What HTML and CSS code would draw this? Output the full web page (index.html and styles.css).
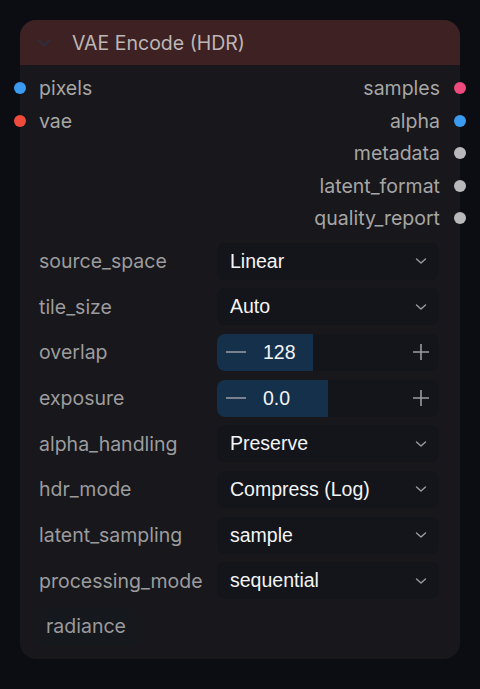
FILE: index.html
```html
<!DOCTYPE html>
<html>
<head>
<meta charset="utf-8">
<link rel="stylesheet" href="styles.css">
</head>
<body>
<div class="node">
  <div class="header">
    <svg class="collapse" width="14" height="10" viewBox="0 0 14 10"><path d="M2 2.5 L7 7.5 L12 2.5" fill="none" stroke="#2c2f3d" stroke-width="1.8" stroke-linecap="round" stroke-linejoin="round"/></svg>
    <span class="title">VAE Encode (HDR)</span>
  </div>
  <div class="slots">
    <div class="slot-row"><div class="slot in"><span class="dot blue"></span>pixels</div><div class="slot out">samples<span class="dot pink"></span></div></div>
    <div class="slot-row"><div class="slot in"><span class="dot red"></span>vae</div><div class="slot out">alpha<span class="dot blue"></span></div></div>
    <div class="slot-row"><div class="slot out">metadata<span class="dot gray"></span></div></div>
    <div class="slot-row"><div class="slot out">latent_format<span class="dot gray"></span></div></div>
    <div class="slot-row"><div class="slot out">quality_report<span class="dot gray"></span></div></div>
  </div>
  <div class="widgets">
    <div class="widget"><span class="wlabel">source_space</span><div class="wbox combo"><span class="val">Linear</span><svg class="chev" width="12" height="8" viewBox="0 0 12 8"><path d="M1.5 2 L6 6 L10.5 2" fill="none" stroke="#9a9ca4" stroke-width="1.4" stroke-linecap="round" stroke-linejoin="round"/></svg></div></div>
    <div class="widget"><span class="wlabel">tile_size</span><div class="wbox combo"><span class="val">Auto</span><svg class="chev" width="12" height="8" viewBox="0 0 12 8"><path d="M1.5 2 L6 6 L10.5 2" fill="none" stroke="#9a9ca4" stroke-width="1.4" stroke-linecap="round" stroke-linejoin="round"/></svg></div></div>
    <div class="widget"><span class="wlabel">overlap</span><div class="wbox number"><div class="fill" style="width:96px"></div><svg class="minus" width="20" height="2" viewBox="0 0 20 2"><path d="M0 1 H20" stroke="#9a9ca4" stroke-width="1.6"/></svg><span class="val num">128</span><svg class="plus" width="16" height="16" viewBox="0 0 16 16"><path d="M8 0 V16 M0 8 H16" stroke="#9a9ca4" stroke-width="1.6"/></svg></div></div>
    <div class="widget"><span class="wlabel">exposure</span><div class="wbox number"><div class="fill" style="width:111px"></div><svg class="minus" width="20" height="2" viewBox="0 0 20 2"><path d="M0 1 H20" stroke="#9a9ca4" stroke-width="1.6"/></svg><span class="val num">0.0</span><svg class="plus" width="16" height="16" viewBox="0 0 16 16"><path d="M8 0 V16 M0 8 H16" stroke="#9a9ca4" stroke-width="1.6"/></svg></div></div>
    <div class="widget"><span class="wlabel">alpha_handling</span><div class="wbox combo"><span class="val">Preserve</span><svg class="chev" width="12" height="8" viewBox="0 0 12 8"><path d="M1.5 2 L6 6 L10.5 2" fill="none" stroke="#9a9ca4" stroke-width="1.4" stroke-linecap="round" stroke-linejoin="round"/></svg></div></div>
    <div class="widget"><span class="wlabel">hdr_mode</span><div class="wbox combo"><span class="val">Compress (Log)</span><svg class="chev" width="12" height="8" viewBox="0 0 12 8"><path d="M1.5 2 L6 6 L10.5 2" fill="none" stroke="#9a9ca4" stroke-width="1.4" stroke-linecap="round" stroke-linejoin="round"/></svg></div></div>
    <div class="widget"><span class="wlabel">latent_sampling</span><div class="wbox combo"><span class="val">sample</span><svg class="chev" width="12" height="8" viewBox="0 0 12 8"><path d="M1.5 2 L6 6 L10.5 2" fill="none" stroke="#9a9ca4" stroke-width="1.4" stroke-linecap="round" stroke-linejoin="round"/></svg></div></div>
    <div class="widget"><span class="wlabel">processing_mode</span><div class="wbox combo"><span class="val">sequential</span><svg class="chev" width="12" height="8" viewBox="0 0 12 8"><path d="M1.5 2 L6 6 L10.5 2" fill="none" stroke="#9a9ca4" stroke-width="1.4" stroke-linecap="round" stroke-linejoin="round"/></svg></div></div>
  </div>
  <div class="footer"><span class="tag">radiance</span></div>
</div>
</body>
</html>
```

FILE: styles.css
```css
html, body {
  margin: 0;
  padding: 0;
  background: #0b0d13;
  width: 480px;
  height: 689px;
  overflow: hidden;
  font-family: Inter, "Noto Sans", sans-serif;
}
body {
  padding-top: 20px;
  box-sizing: border-box;
}
.node {
  position: relative;
  margin-left: 20px;
  width: 440px;
  height: 639px;
  background: #18171b;
  border-radius: 16px;
  box-sizing: border-box;
}
.header {
  height: 45px;
  background: #3e2122;
  border-radius: 16px 16px 0 0;
  display: flex;
  align-items: center;
  padding-left: 17px;
}
.collapse {
  margin-right: 21px;
}
.title {
  color: #bdb6b6;
  font-size: 19.5px;
}
.slots {
  padding-top: 7px;
  display: flex;
  flex-direction: column;
}
.slot-row {
  height: 32.5px;
  display: flex;
  align-items: center;
  justify-content: space-between;
  font-size: 19.5px;
  color: #a6a6a6;
}
.slot {
  display: flex;
  align-items: center;
}
.slot.in {
  margin-left: -6px;
}
.slot.in .dot {
  margin-right: 13px;
}
.slot.out {
  margin-left: auto;
  margin-right: -6px;
}
.slot.out .dot {
  margin-left: 14px;
}
.dot {
  width: 12px;
  height: 12px;
  border-radius: 50%;
  display: inline-block;
}
.dot.blue { background: #3a9bf0; }
.dot.red { background: #ef4b3c; }
.dot.pink { background: #ee4a7e; }
.dot.gray { background: #b9b9bb; }
.widgets {
  margin-top: 8px;
  display: flex;
  flex-direction: column;
  gap: 8.7px;
  padding: 0 21px 0 19px;
}
.widget {
  display: flex;
  align-items: center;
  height: 37px;
}
.wlabel {
  width: 178px;
  flex: none;
  color: #9c9c9e;
  font-size: 19.5px;
}
.wbox {
  position: relative;
  flex: 1;
  height: 37px;
  background: #13151a;
  border-radius: 8px;
  display: flex;
  align-items: center;
  overflow: hidden;
}
.combo {
  padding: 0 13px;
}
.val {
  color: #f4f4f6;
  font-family: "Liberation Sans", Arial, sans-serif;
  font-size: 19.5px;
  flex: 1;
}
.chev {
  margin-right: -1px;
}
.number .fill {
  position: absolute;
  left: 0;
  top: 0;
  bottom: 0;
  background: #14304a;
}
.number .minus {
  position: relative;
  margin-left: 9px;
  margin-right: 17px;
}
.number .num {
  position: relative;
}
.number .plus {
  position: relative;
  margin-right: 10px;
}
.footer {
  padding: 9px 0 0 17px;
}
.tag {
  display: inline-block;
  background: #15181d;
  color: #9a9a9c;
  font-size: 19.5px;
  padding: 6px 10px 8px 9px;
  border-radius: 8px;
}
```
